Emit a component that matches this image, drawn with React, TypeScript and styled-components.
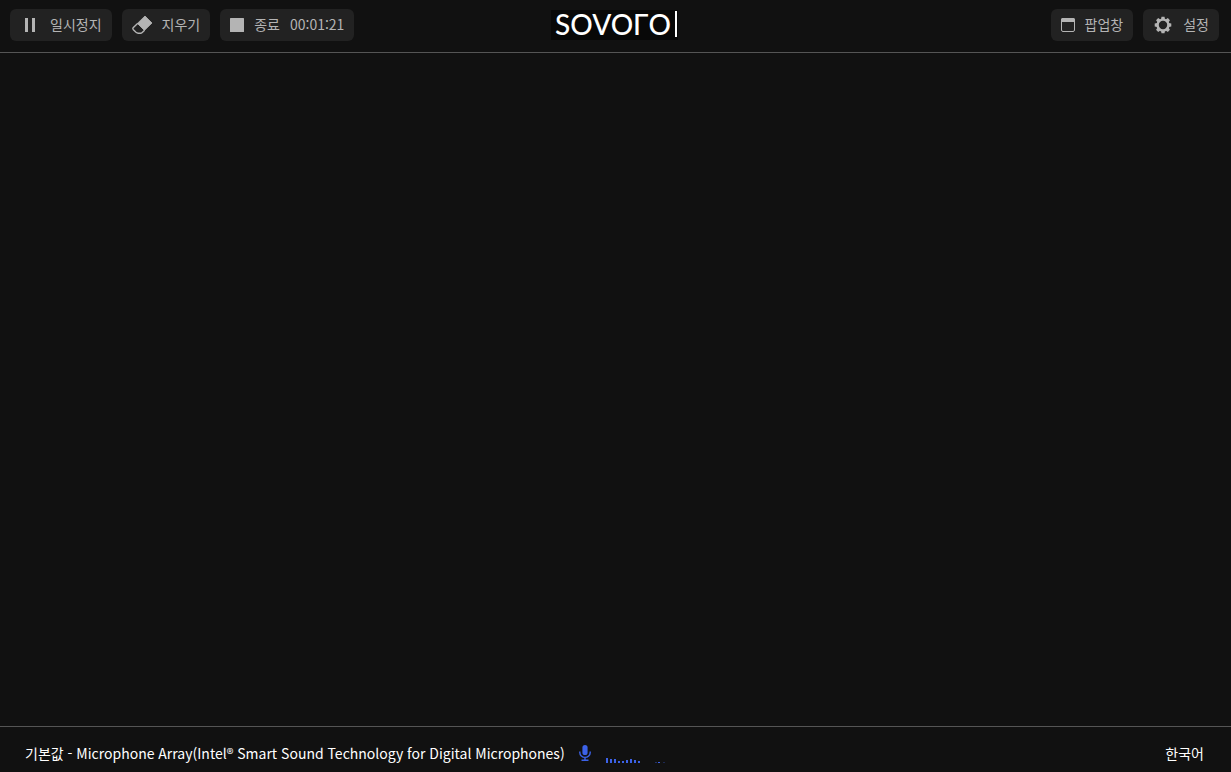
import React from "react";
import styled, { createGlobalStyle } from "styled-components";

const GlobalStyle = createGlobalStyle`
  *, *::before, *::after { box-sizing: border-box; }
  body {
    margin: 0;
    background: #111111;
    font-family: "Noto Sans CJK KR", "Noto Sans", sans-serif;
    font-size: 14px;
    line-height: 20px;
  }
  button { font: inherit; cursor: pointer; }
`;

const Page = styled.div`
  display: flex;
  flex-direction: column;
  min-height: 100vh;
`;

const Header = styled.header`
  display: grid;
  grid-template-columns: 1fr auto 1fr;
  align-items: center;
  padding: 9px 12px 11px 10px;
  border-bottom: 1px solid #555555;
`;

const ButtonGroup = styled.div<{ $align?: "start" | "end" }>`
  display: flex;
  gap: 10px;
  justify-content: flex-${({ $align = "start" }) => $align};
`;

const ToolButton = styled.button`
  display: flex;
  align-items: center;
  gap: 10px;
  height: 32px;
  padding: 0 10px;
  border: 0;
  border-radius: 6px;
  background: #222222;
  color: #b4b4b4;
  white-space: nowrap;

  svg { flex: none; }
`;

const Label = styled.span`
  padding-bottom: 2px;
`;

const Logo = styled.h1`
  display: flex;
  align-items: center;
  gap: 4px;
  height: 30px;
  margin: 0;
  padding: 0 1px 2px 4px;
  background: #080808;
  color: #ffffff;
  font-family: Lato, sans-serif;
  font-size: 28px;
  font-weight: 500;
  line-height: 28px;
`;

const Cursor = styled.span`
  width: 2px;
  height: 26px;
  background: #ffffff;
`;

const Transcript = styled.main`
  flex: 1;
`;

const Footer = styled.footer`
  display: flex;
  align-items: center;
  justify-content: space-between;
  height: 46px;
  padding: 6px 27px 0 25px;
  border-top: 1px solid #555555;
`;

const Source = styled.div`
  display: flex;
  align-items: center;
  gap: 14px;
`;

const FooterButton = styled.button`
  padding: 0;
  border: 0;
  background: none;
  color: #ffffff;
  white-space: nowrap;
`;

const Input = styled.div`
  display: flex;
  align-items: center;
  gap: 15px;
  color: #3c62e8;
`;

const PauseIcon = () => (
  <svg width="20" height="20" viewBox="0 0 20 20" fill="currentColor" aria-hidden="true">
    <rect x="5" y="3" width="3" height="14" />
    <rect x="12" y="3" width="3" height="14" />
  </svg>
);

const EraserIcon = () => (
  <svg width="20" height="20" viewBox="0 0 20 20" aria-hidden="true">
    <path d="M13 1L20 8L12.4 15.4L5.4 8.4Z" fill="currentColor" stroke="currentColor" strokeWidth="0.8" strokeLinejoin="round" />
    <path d="M5.8 8.2L1.4 12.4Q0.3 13.6 1.4 14.8L4 17.3Q5 18.2 6.2 18.2H8.4Q9.4 18.2 10.2 17.4L12.6 15.2" fill="none" stroke="currentColor" strokeWidth="1.4" />
  </svg>
);

const StopIcon = () => (
  <svg width="14" height="14" viewBox="0 0 14 14" fill="currentColor" aria-hidden="true">
    <rect width="14" height="14" rx="0.5" />
  </svg>
);

const WindowIcon = () => (
  <svg width="14" height="14" viewBox="0 0 14 14" aria-hidden="true">
    <rect x="0.5" y="0.5" width="13" height="13" rx="1.5" fill="none" stroke="currentColor" />
    <path d="M0 4V1.5Q0 0 1.5 0H12.5Q14 0 14 1.5V4Z" fill="currentColor" />
  </svg>
);

const GearIcon = () => (
  <svg width="20" height="20" viewBox="-10 -10 20 20" fill="currentColor" aria-hidden="true">
    <circle r="5.4" fill="none" stroke="currentColor" strokeWidth="2.4" />
    {[0, 45, 90, 135, 180, 225, 270, 315].map((angle) => (
      <path key={angle} d="M-2 -5.8L-1.5 -8.3H1.5L2 -5.8Z" transform={`rotate(${angle})`} />
    ))}
  </svg>
);

const MicIcon = () => (
  <svg width="12" height="16" viewBox="0 0 12 16" aria-hidden="true">
    <rect x="3.4" y="0" width="5.2" height="10" rx="2.6" fill="currentColor" />
    <path d="M0.8 6.5V7.4A5.2 5 0 0 0 11.2 7.4V6.5M6 12.4V15.2M2.5 15.3H9.5" fill="none" stroke="currentColor" strokeWidth="1.4" />
  </svg>
);

const levels = [5, 4, 4, 2, 2, 3, 4, 3, 2];

const LevelMeter = () => (
  <svg width="60" height="20" viewBox="0 0 60 20" fill="currentColor" role="img" aria-label="마이크 입력 레벨">
    {levels.map((level, i) => (
      <rect key={i} x={i * 4} y={20 - level} width="2" height={level} />
    ))}
    <rect x="49" y="19" width="2" height="1" opacity="0.4" />
    <rect x="52" y="19" width="2" height="1" />
    <rect x="57" y="19" width="2" height="1" opacity="0.3" />
  </svg>
);

export default function App() {
  return (
    <Page lang="ko">
      <GlobalStyle />
      <Header>
        <ButtonGroup>
          <ToolButton type="button"><PauseIcon /><Label>일시정지</Label></ToolButton>
          <ToolButton type="button"><EraserIcon /><Label>지우기</Label></ToolButton>
          <ToolButton type="button">
            <StopIcon />
            <Label>종료</Label>
            <Label as="time">00:01:21</Label>
          </ToolButton>
        </ButtonGroup>
        <Logo><span>SOVOΓO</span><Cursor /></Logo>
        <ButtonGroup $align="end">
          <ToolButton type="button"><WindowIcon /><Label>팝업창</Label></ToolButton>
          <ToolButton type="button"><GearIcon /><Label>설정</Label></ToolButton>
        </ButtonGroup>
      </Header>
      <Transcript />
      <Footer>
        <Source>
          <FooterButton type="button">
            기본값 - Microphone Array(Intel® Smart Sound Technology for Digital Microphones)
          </FooterButton>
          <Input>
            <MicIcon />
            <LevelMeter />
          </Input>
        </Source>
        <FooterButton type="button">한국어</FooterButton>
      </Footer>
    </Page>
  );
}
